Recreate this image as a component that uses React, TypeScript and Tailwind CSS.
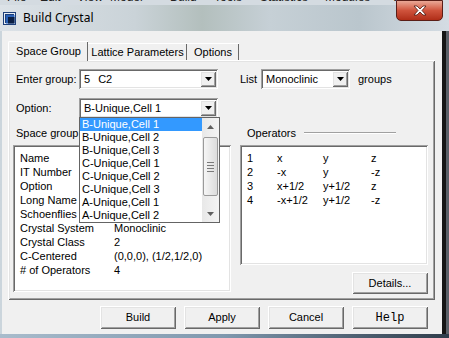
import React from "react";

const sunken =
  "shadow-[inset_1px_1px_0_#a0a0a0,inset_-1px_-1px_0_#ffffff,inset_2px_2px_0_#696969,inset_-2px_-2px_0_#e3e3e3]";
const raised =
  "shadow-[inset_1px_1px_0_#ffffff,inset_-1px_-1px_0_#696969,inset_2px_2px_0_#e3e3e3,inset_-2px_-2px_0_#a0a0a0]";

const menu = [
  { label: "File", w: "w-[33px]" },
  { label: "Edit", w: "w-[37px]" },
  { label: "View", w: "w-[33px]" },
  { label: "Model", w: "w-[60px]" },
  { label: "Build", w: "w-[44px]" },
  { label: "Tools", w: "w-[46px]" },
  { label: "Statistics", w: "w-[65px]" },
  { label: "Modules", w: "w-[67px]" },
  { label: "Window", w: "w-[50px]" },
];

const options = [
  "B-Unique,Cell 1",
  "B-Unique,Cell 2",
  "B-Unique,Cell 3",
  "C-Unique,Cell 1",
  "C-Unique,Cell 2",
  "C-Unique,Cell 3",
  "A-Unique,Cell 1",
  "A-Unique,Cell 2",
];

// first rows sit under the open drop-down list, only their labels show
const hiddenRows = ["Name", "IT Number", "Option", "Long Name", "Schoenflies Symbol"];

const info = [
  ["Crystal System", "Monoclinic"],
  ["Crystal Class", "2"],
  ["C-Centered", "(0,0,0), (1/2,1/2,0)"],
  ["# of Operators", "4"],
];

const ops = [
  ["1", "x", "y", "z"],
  ["2", "-x", "y", "-z"],
  ["3", "x+1/2", "y+1/2", "z"],
  ["4", "-x+1/2", "y+1/2", "-z"],
];

function Combo({ value, width }: { value: React.ReactNode; width: string }) {
  return (
    <div className={`${width} h-[20px] bg-white ${sunken} flex items-center p-[2px]`}>
      <div className="flex-1 pl-[3px] text-[11px] leading-none whitespace-nowrap">{value}</div>
      <div className={`w-[16px] h-[16px] bg-[#f0f0f0] ${raised} flex items-center justify-center`}>
        <svg width="7" height="4" viewBox="0 0 7 4">
          <path d="M0 0h7L3.5 4z" fill="#000" />
        </svg>
      </div>
    </div>
  );
}

function Button({ children, mono }: { children: React.ReactNode; mono?: boolean }) {
  return (
    <div
      className={`w-[76px] h-[23px] bg-[#f0f0f0] ${raised} flex items-center justify-center ${
        mono ? "font-['Liberation_Mono',monospace] text-[12px]" : "text-[11px]"
      }`}
    >
      {children}
    </div>
  );
}

export default function App() {
  return (
    <div className="relative w-[449px] h-[338px] overflow-hidden flex flex-col bg-[#3a3f45] font-['Liberation_Sans',Arial,sans-serif] text-black">
      {/* app menu peeking behind the glass frame */}
      <div className="h-[5px] overflow-hidden bg-[#d4dbe1]">
        <div className="-mt-[9px] flex pl-[7px] text-[12px] leading-[12px] text-[#222] whitespace-nowrap">
          {menu.map((m) => (
            <span key={m.label} className={m.w}>
              {m.label}
            </span>
          ))}
        </div>
      </div>

      {/* title bar */}
      <div className="h-[26px] flex items-center pl-[3px] bg-[linear-gradient(90deg,#dce2e7_0%,#cad3d8_30%,#b3bfbd_45%,#c6d0d6_60%,#bac6cd_80%,#d4dce3_100%)]">
        <svg width="13" height="13" viewBox="0 0 13 13">
          <rect x="0" y="0" width="13" height="13" fill="#1d3f7a" />
          <rect x="1.5" y="1.5" width="10" height="10" fill="none" stroke="#e8eef6" strokeWidth="1" />
          <rect x="3" y="3" width="8.5" height="8.5" fill="#2a62b8" />
          <rect x="5" y="5" width="6.5" height="6.5" fill="#0b1f44" />
        </svg>
        <span className="ml-[7px] font-['Noto_Sans',sans-serif] text-[12px] leading-none">Build Crystal</span>
      </div>

      <div className="absolute right-[6px] top-0 w-[47px] h-[21px] rounded-b-[5px] border border-[#5a1e17] bg-gradient-to-b from-[#e9a796] via-[#cf533c] to-[#b02d17] flex items-center justify-center">
        <svg width="14" height="11" viewBox="0 0 14 11">
          <path
            d="M1 1h3l3 3 3-3h3L9 5.5 13 10h-3L7 7 4 10H1l4-4.5z"
            fill="#ffffff"
            stroke="#4a1810"
            strokeWidth="0.8"
          />
        </svg>
      </div>

      <div className="flex h-[303px] bg-gradient-to-r from-[#cbd5dc] to-[#c3ced6]">
        {/* client area */}
        <div className="ml-[2px] w-[440px] h-[303px] bg-[#f0f0f0] pt-[10px] pl-[6px] flex flex-col">
          {/* tabs */}
          <div className="flex items-start h-[19px] text-[11px]">
            <div className="relative z-10 w-[80px] h-[20px] bg-[#f0f0f0] border-t border-l border-white rounded-tl-[2px] shadow-[inset_-1px_0_0_#696969] flex items-center justify-center">
              Space Group
            </div>
            <div className="mt-[2px] w-[99px] h-[17px] border-t border-white shadow-[inset_-1px_0_0_#696969] flex items-center justify-center">
              Lattice Parameters
            </div>
            <div className="mt-[2px] w-[52px] h-[17px] border-t border-white shadow-[inset_-1px_0_0_#696969] flex items-center justify-center">
              Options
            </div>
          </div>

          {/* tab page */}
          <div className={`relative w-[427px] h-[240px] bg-[#f0f0f0] ${raised} pt-[9px] text-[11px]`}>
            <div className="flex items-center h-[20px] pl-[8px]">
              <span className="w-[63px]">Enter group:</span>
              <Combo
                width="w-[139px]"
                value={
                  <span>
                    5<span className="ml-[8px]">C2</span>
                  </span>
                }
              />
              <span className="ml-[22px] w-[21px]">List</span>
              <Combo width="w-[89px]" value="Monoclinic" />
              <span className="ml-[8px]">groups</span>
            </div>

            <div className="mt-[9px] flex items-center h-[20px] pl-[8px]">
              <span className="w-[63px]">Option:</span>
              <Combo width="w-[139px]" value="B-Unique,Cell 1" />
            </div>

            <div className="mt-[8px] flex pl-[5px] gap-[9px]">
              <div className="w-[218px] flex flex-col">
                <div className="h-[14px] leading-[14px] pl-[3px] whitespace-nowrap">Space group</div>
                <div className={`mt-[5px] h-[147px] bg-white ${sunken} pt-[6px] pl-[7px]`}>
                  {hiddenRows.map((k) => (
                    <div key={k} className="h-[14px] leading-[14px] w-[59px] overflow-hidden whitespace-nowrap">
                      {k}
                    </div>
                  ))}
                  {info.map(([k, v]) => (
                    <div key={k} className="flex h-[14px] leading-[14px] whitespace-nowrap">
                      <span className="w-[94px]">{k}</span>
                      <span>{v}</span>
                    </div>
                  ))}
                </div>
              </div>

              <div className="w-[188px] flex flex-col">
                <div className="h-[14px] flex items-center pl-[7px]">
                  <span>Operators</span>
                  <div className="ml-[8px] w-[92px] h-[2px] border-t border-[#a0a0a0] border-b border-b-white" />
                </div>
                <div className={`mt-[5px] h-[120px] bg-white ${sunken} pt-[6px] pl-[7px]`}>
                  {ops.map((r) => (
                    <div key={r[0]} className="flex h-[14px] leading-[14px] whitespace-nowrap">
                      <span className="w-[30px]">{r[0]}</span>
                      <span className="w-[46px]">{r[1]}</span>
                      <span className="w-[48px]">{r[2]}</span>
                      <span>{r[3]}</span>
                    </div>
                  ))}
                </div>
                <div className={`mt-[7px] self-end w-[76px] h-[22px] bg-[#f0f0f0] ${raised} flex items-center justify-center`}>
                  Details...
                </div>
              </div>
            </div>

            {/* open drop-down list */}
            <div className="absolute left-[71px] top-[57px] z-20 w-[141px] h-[106px] border border-[#646464] bg-white flex">
              <div className="flex-1 flex flex-col">
                {options.map((o, i) => (
                  <div
                    key={o}
                    className={`h-[13px] leading-[13px] pl-[2px] whitespace-nowrap ${
                      i === 0 ? "bg-[#3399ff] text-white" : ""
                    }`}
                  >
                    {o}
                  </div>
                ))}
              </div>
              <div className="w-[17px] flex flex-col bg-gradient-to-r from-[#e8e8e8] to-[#f4f4f4]">
                <div className="h-[17px] flex items-center justify-center">
                  <svg width="7" height="4" viewBox="0 0 7 4">
                    <path d="M0 4h7L3.5 0z" fill="#606060" />
                  </svg>
                </div>
                <div className="mt-[2px] mx-[1px] h-[59px] rounded-[2px] border border-[#9a9a9a] bg-gradient-to-r from-[#f6f6f6] to-[#dcdcdc] flex flex-col items-center justify-center gap-[2px]">
                  <div className="w-[7px] h-[1px] bg-[#7a7a7a]" />
                  <div className="w-[7px] h-[1px] bg-[#7a7a7a]" />
                  <div className="w-[7px] h-[1px] bg-[#7a7a7a]" />
                  <div className="w-[7px] h-[1px] bg-[#7a7a7a]" />
                </div>
                <div className="flex-1" />
                <div className="h-[17px] flex items-center justify-center">
                  <svg width="7" height="4" viewBox="0 0 7 4">
                    <path d="M0 0h7L3.5 4z" fill="#606060" />
                  </svg>
                </div>
              </div>
            </div>
          </div>

          {/* dialog buttons */}
          <div className="mt-[6px] flex justify-end gap-[8px] pr-[14px]">
            <Button>Build</Button>
            <Button>Apply</Button>
            <Button>Cancel</Button>
            <Button mono>Help</Button>
          </div>
        </div>
        <div className="w-[4px] bg-[#161616]" />
        <div className="flex-1 bg-[#5a6068]" />
      </div>

      <div className="flex-1 bg-gradient-to-r from-[#a9bccc] via-[#7f98ae] to-[#2f3d4b]" />
    </div>
  );
}
